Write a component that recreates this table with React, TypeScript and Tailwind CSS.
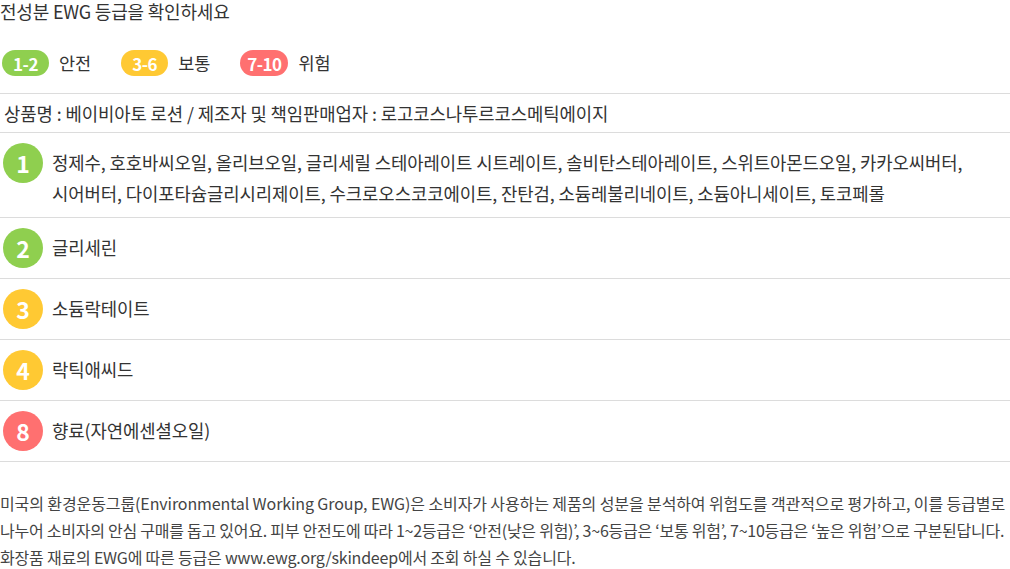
import React from "react";

const legend = [
  { label: "1-2", text: "안전", color: "bg-[#8fcf4f]", w: "w-[47px]" },
  { label: "3-6", text: "보통", color: "bg-[#ffc933]", w: "w-[47px]" },
  { label: "7-10", text: "위험", color: "bg-[#ff7070]", w: "w-[48px]" },
];

const items = [
  {
    n: "1",
    color: "bg-[#8fcf4f]",
    text: "정제수, 호호바씨오일, 올리브오일, 글리세릴 스테아레이트 시트레이트, 솔비탄스테아레이트, 스위트아몬드오일, 카카오씨버터, 시어버터, 다이포타슘글리시리제이트, 수크로오스코코에이트, 잔탄검, 소듐레불리네이트, 소듐아니세이트, 토코페롤",
  },
  { n: "2", color: "bg-[#8fcf4f]", text: "글리세린" },
  { n: "3", color: "bg-[#ffc933]", text: "소듐락테이트" },
  { n: "4", color: "bg-[#ffc933]", text: "락틱애씨드" },
  { n: "8", color: "bg-[#ff7070]", text: "향료(자연에센셜오일)" },
];

export default function App() {
  return (
    <div
      className="w-[1010px] bg-white text-[#333]"
      style={{ fontFamily: '"Noto Sans CJK KR", "Noto Sans", sans-serif' }}
    >
      <h2 className="text-[18px] leading-[22px] font-normal tracking-[-0.2px]">
        전성분 EWG 등급을 확인하세요
      </h2>
      <div className="flex items-center pt-[28px] pb-[17px] border-b border-[#dcdcdc]">
        {legend.map((l) => (
          <div key={l.label} className="flex items-center mr-[28px]">
            <span
              className={`${l.color} ${l.w} ml-[2px] h-[26px] rounded-full flex items-center justify-center text-white font-bold text-[17px] leading-none tracking-[-0.5px]`}
            >
              {l.label}
            </span>
            <span className="ml-[10px] text-[17.5px] leading-[22px]">{l.text}</span>
          </div>
        ))}
      </div>
      <div className="h-[39px] flex items-center pl-[4px] text-[17.8px] tracking-[-0.1px] border-b border-[#dcdcdc]">
        상품명 : 베이비아토 로션 / 제조자 및 책임판매업자 : 로고코스나투르코스메틱에이지
      </div>
      {items.map((it) => (
        <div
          key={it.n}
          className="flex items-start py-[10px] border-b border-[#dcdcdc]"
        >
          <span
            className={`${it.color} shrink-0 ml-[3px] w-[40px] h-[40px] rounded-full flex items-center justify-center text-white font-bold text-[23px] leading-none`}
          >
            {it.n}
          </span>
          <p className="ml-[9px] pt-[4px] mb-[-2px] text-[17.8px] leading-[31px] tracking-[-0.1px] break-keep">
            {it.text}
          </p>
        </div>
      ))}
      <div className="pt-[28px] text-[16px] leading-[27px] text-[#444] whitespace-nowrap">
        <p className="tracking-[-0.1px]">
          미국의 환경운동그룹(Environmental Working Group, EWG)은 소비자가 사용하는 제품의 성분을 분석하여 위험도를 객관적으로 평가하고, 이를 등급별로
        </p>
        <p className="tracking-[-0.25px]">
          나누어 소비자의 안심 구매를 돕고 있어요. 피부 안전도에 따라 1~2등급은 ‘안전(낮은 위험)’, 3~6등급은 ‘보통 위험’, 7~10등급은 ‘높은 위험’으로 구분된답니다.
        </p>
        <p className="tracking-[-0.2px]">
          화장품 재료의 EWG에 따른 등급은 www.ewg.org/skindeep에서 조회 하실 수 있습니다.
        </p>
      </div>
    </div>
  );
}
